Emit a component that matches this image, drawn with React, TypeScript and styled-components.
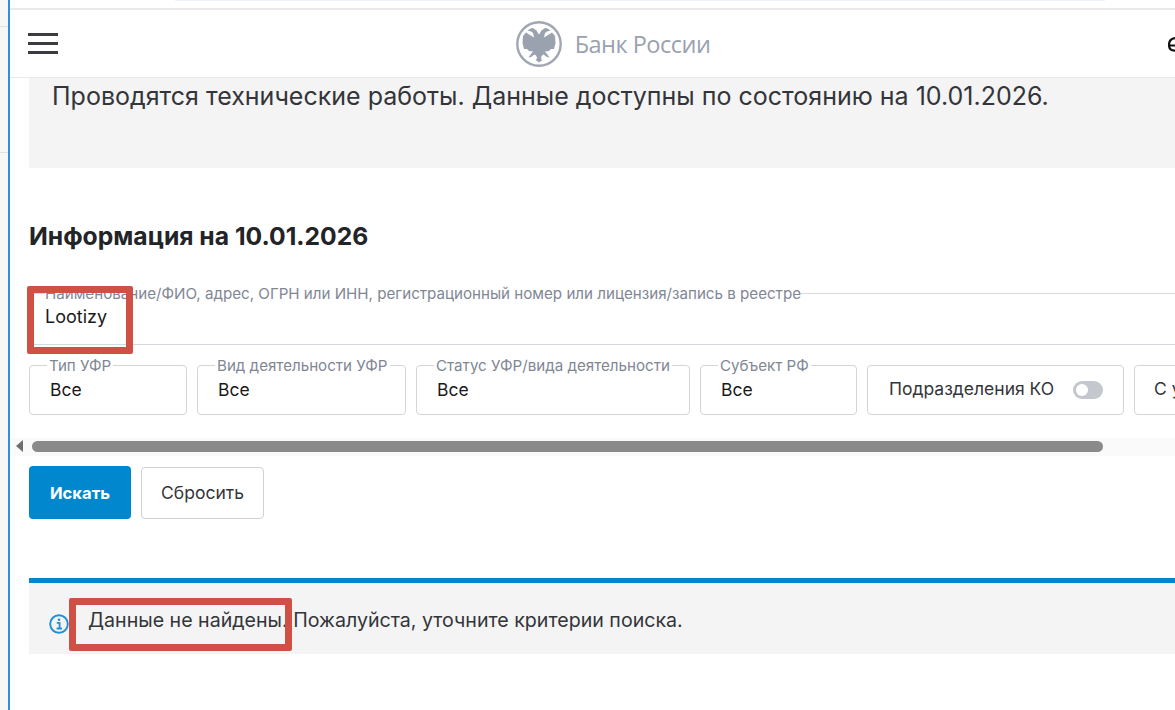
import * as React from "react";
import styled, { createGlobalStyle } from "styled-components";

const GlobalStyle = createGlobalStyle`
  html, body {
    margin: 0;
    padding: 0;
    background: #fff;
    overflow: hidden;
  }
  * {
    box-sizing: border-box;
  }
`;

/// Styles

const Page = styled.div`
  position: relative;
  display: flex;
  width: 1175px;
  height: 710px;
  overflow: hidden;
  font-family: Inter, "Liberation Sans", sans-serif;
  color: #333539;
`;

const BackWindow = styled.div`
  flex: 0 0 10px;
  display: flex;
  flex-direction: column;
  background: #f7f7f7;
  border-right: 2px solid #2f8fdc;
`;

const BackWindowCell = styled.div<{ $height: number }>`
  height: ${p => p.$height}px;
  border-bottom: 1px solid #e2e2e2;
`;

const Main = styled.div`
  flex: 1;
  min-width: 0;
  display: flex;
  flex-direction: column;
`;

const TopStrip = styled.div`
  flex: 0 0 10px;
  padding-left: 165px;
  border-bottom: 2px solid #e9e9e9;
`;

const TopStripBar = styled.div`
  width: 930px;
  height: 1px;
  background: #eef3fb;
`;

const Header = styled.header`
  flex: 0 0 68px;
  display: flex;
  align-items: center;
  justify-content: space-between;
  padding-left: 18px;
  background: #fff;
  border-bottom: 1px solid #e9e9e9;
`;

const Burger = styled.div`
  width: 30px;
  display: flex;
  flex-direction: column;
  gap: 6px;
`;

const BurgerLine = styled.span`
  height: 3px;
  background: #3a3c40;
`;

const Logo = styled.div`
  display: flex;
  align-items: center;
  gap: 13px;
`;

const LogoText = styled.span`
  font-family: "Open Sans", sans-serif;
  font-size: 23.5px;
  letter-spacing: -0.5px;
  color: #9aa1af;
`;

const CutIcon = styled.svg`
  flex: none;
  margin-right: -1px;
`;

const Content = styled.div`
  padding-left: 19px;
  width: 1400px;
`;

const Notice = styled.div`
  height: 90px;
  padding: 3px 0 0 23px;
  background: #f4f4f4;
  font-size: 25px;
  line-height: 30px;
`;

const Title = styled.h1`
  margin: 52px 0 0;
  font-size: 24.7px;
  line-height: 32px;
  font-weight: 700;
  color: #222427;
`;

const SearchField = styled.fieldset`
  margin: 33px 0 0;
  padding: 0 16px;
  height: 60px;
  border: 1px solid #d5d8dd;
  border-left: none;
  border-right: none;
  border-radius: 0;
  width: 1300px;
`;

const FieldLegend = styled.legend`
  padding: 0;
  font-size: 15.15px;
  line-height: 17px;
  white-space: nowrap;
  color: #7f8794;
`;

const SearchValue = styled.div`
  font-size: 18px;
  line-height: 24px;
  margin-top: 3px;
  color: #1a1a1a;
`;

const FilterRow = styled.div`
  display: flex;
  gap: 10px;
  margin-top: 12px;
`;

const Filter = styled.fieldset<{ $width: number }>`
  flex: 0 0 ${p => p.$width}px;
  margin: 0;
  height: 58px;
  padding: 0 0 0 20px;
  border: 1px solid #d2d5da;
  border-radius: 4px;
  min-width: 0;

  legend {
    padding: 0 2px;
    margin-left: -3px;
  }
`;

const FilterValue = styled.div`
  font-size: 17.5px;
  line-height: 22px;
  margin-top: 5px;
  color: #1a1a1a;
`;

const ToggleCard = styled.div<{ $width: number; $pad: number }>`
  flex: 0 0 ${p => p.$width}px;
  height: 50px;
  margin-top: 8px;
  display: flex;
  align-items: center;
  justify-content: space-between;
  padding: 0 20px 3px ${p => p.$pad}px;
  border: 1px solid #d2d5da;
  border-radius: 4px;
  font-size: 17.5px;
  color: #333539;
  white-space: nowrap;
`;

const Toggle = styled.span`
  position: relative;
  top: 1px;
  width: 30px;
  height: 18px;
  border-radius: 9px;
  background: #c4c8ce;

  &::after {
    content: "";
    position: absolute;
    left: 3px;
    top: 3px;
    width: 12px;
    height: 12px;
    border-radius: 50%;
    background: #fff;
  }
`;

const ScrollTrack = styled.div`
  display: flex;
  align-items: flex-start;
  height: 18px;
  margin: 23px 0 0 -19px;
  padding-top: 3px;
  background: #fafafa;
`;

const ScrollArrow = styled.span`
  width: 0;
  height: 0;
  margin: -1px 0 0 6px;
  border-style: solid;
  border-width: 6px 7px 6px 0;
  border-color: transparent #6e6e6e transparent transparent;
`;

const ScrollThumb = styled.div`
  width: 1071px;
  height: 11px;
  margin-left: 9px;
  border-radius: 6px;
  background: #8a8a8a;
`;

const Buttons = styled.div`
  display: flex;
  align-items: center;
  gap: 10px;
  margin-top: 10px;
`;

const PrimaryButton = styled.button`
  width: 102px;
  height: 53px;
  border: none;
  border-radius: 4px;
  background: #0087cd;
  color: #fff;
  font: 700 16.6px Inter, sans-serif;
`;

const SecondaryButton = styled.button`
  width: 123px;
  height: 52px;
  border: 1px solid #cfd2d7;
  border-radius: 4px;
  background: #fff;
  color: #333539;
  font: 400 17.5px Inter, sans-serif;
`;

const Alert = styled.div`
  display: flex;
  align-items: center;
  gap: 19px;
  height: 76px;
  margin-top: 59px;
  padding: 11px 0 0 20px;
  border-top: 5px solid #0087cd;
  background: #f4f4f4;
  font-size: 19.6px;
`;

const AlertText = styled.span`
  margin-bottom: 8px;
`;

const Mark = styled.div<{ $x: number; $y: number; $w: number; $h: number }>`
  position: absolute;
  left: ${p => p.$x}px;
  top: ${p => p.$y}px;
  width: ${p => p.$w}px;
  height: ${p => p.$h}px;
  border: 7px solid #cf5044;
  border-radius: 2px;
`;

/// Icons

const EAGLE_HALF =
  "M23.500 14.500L20.500 9.500L17 7L14.500 7.500L11.500 9.500L15 10.500L17 12L18 16.500L14 14L10 11.500L7 15L6.500 22L8 28L11 28L13 30L17 30.500L15 33L12.500 36.500L15 36L18.500 33.500L20 34.500L21 36.500L20 39.500L23.500 41.500z";

const BankEmblem = () => (
  <svg width="46" height="46" viewBox="0 0 46 46">
    <circle cx="23" cy="23" r="21.700" fill="none" stroke="#a0a6b2" strokeWidth="2.400" />
    <path fill="#9aa1af" d={EAGLE_HALF} />
    <path fill="#9aa1af" d={EAGLE_HALF} transform="matrix(-1 0 0 1 46 0)" />
  </svg>
);

const InfoIcon = () => (
  <svg width="20" height="20" viewBox="0 0 20 20">
    <circle cx="10" cy="10" r="8.800" fill="none" stroke="#1f8fd6" strokeWidth="1.900" />
    <circle cx="10" cy="5.800" r="1.300" fill="#1f8fd6" />
    <path d="M7.800 8.800h2.800v5.300M7.600 14.500h5.400" fill="none" stroke="#1f8fd6" strokeWidth="1.800" />
  </svg>
);

const filters = [
  { label: "Тип УФР", width: 158 },
  { label: "Вид деятельности УФР", width: 209 },
  { label: "Статус УФР/вида деятельности", width: 274 },
  { label: "Субъект РФ", width: 157 }
];

/// Component
const App: React.FunctionComponent = () => {
  return (
    <Page>
      <GlobalStyle />
      <BackWindow>
        <BackWindowCell $height={27} />
        <BackWindowCell $height={126} />
      </BackWindow>
      <Main>
        <TopStrip>
          <TopStripBar />
        </TopStrip>
        <Header>
          <Burger>
            <BurgerLine />
            <BurgerLine />
            <BurgerLine />
          </Burger>
          <Logo>
            <BankEmblem />
            <LogoText>Банк России</LogoText>
          </Logo>
          <CutIcon width="8" height="18" viewBox="0 0 8 18">
            <path d="M8 3C3 3 1 6 1 10s2 6 7 5.500M1 10.500h7" fill="none" stroke="#111" strokeWidth="2.200" />
          </CutIcon>
        </Header>
        <Content>
          <Notice>Проводятся технические работы. Данные доступны по состоянию на 10.01.2026.</Notice>
          <Title>Информация на 10.01.2026</Title>
          <SearchField>
            <FieldLegend>
              Наименование/ФИО, адрес, ОГРН или ИНН, регистрационный номер или лицензия/запись в реестре
            </FieldLegend>
            <SearchValue>Lootizy</SearchValue>
          </SearchField>
          <FilterRow>
            {filters.map(f => (
              <Filter key={f.label} $width={f.width}>
                <FieldLegend>{f.label}</FieldLegend>
                <FilterValue>Все</FilterValue>
              </Filter>
            ))}
            <ToggleCard $width={257} $pad={21}>
              Подразделения КО
              <Toggle />
            </ToggleCard>
            <ToggleCard $width={257} $pad={19}>
              С учетом истории
            </ToggleCard>
          </FilterRow>
          <ScrollTrack>
            <ScrollArrow />
            <ScrollThumb />
          </ScrollTrack>
          <Buttons>
            <PrimaryButton>Искать</PrimaryButton>
            <SecondaryButton>Сбросить</SecondaryButton>
          </Buttons>
          <Alert>
            <InfoIcon />
            <AlertText>Данные не найдены. Пожалуйста, уточните критерии поиска.</AlertText>
          </Alert>
        </Content>
      </Main>
      <Mark $x={27} $y={286} $w={106} $h={68} />
      <Mark $x={69} $y={598} $w={223} $h={53} />
    </Page>
  );
};

export default App;
